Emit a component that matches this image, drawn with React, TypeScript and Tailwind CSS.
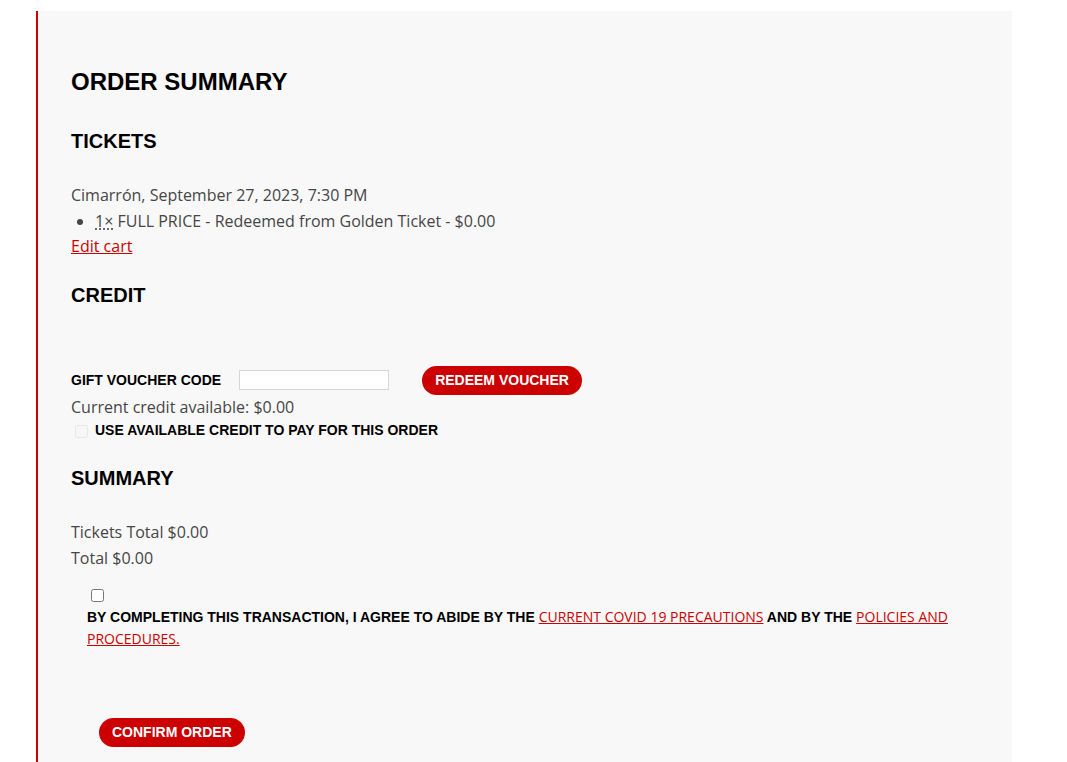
const RED = 'text-[#cc0000]';

function Heading({ children, className = '' }: { children: React.ReactNode; className?: string }) {
  return (
    <h2 className={`font-['Liberation_Sans',Arial,sans-serif] text-[20px] leading-[24px] font-bold text-black ${className}`}>
      {children}
    </h2>
  );
}

function PillButton({ children, className = '' }: { children: React.ReactNode; className?: string }) {
  return (
    <button
      type="button"
      className={`h-[29px] rounded-full bg-[#cc0000] px-[13px] font-['Liberation_Sans',Arial,sans-serif] text-[14px] leading-[29px] font-bold text-white ${className}`}
    >
      {children}
    </button>
  );
}

export default function App() {
  return (
    <div className="min-h-[762px] bg-white pt-[11px] font-['Open_Sans',sans-serif] text-[16px] leading-[25.5px] text-[#464646]">
      <div className="ml-[36px] w-[976px] border-l-2 border-[#cc0000] bg-[#f8f8f8] pt-[56px] pr-[33px] pb-[40px] pl-[33px]">
        <h1 className="font-['Liberation_Sans',Arial,sans-serif] text-[24px] leading-[30px] font-bold text-black">
          ORDER SUMMARY
        </h1>

        <Heading className="mt-[32px]">TICKETS</Heading>
        <div className="mt-[30px]">
          <p>Cimarrón, September 27, 2023, 7:30 PM</p>
          <ul className="list-disc pl-[24px]">
            <li>
              <abbr title="quantity" className="underline decoration-dotted underline-offset-2">1×</abbr> FULL PRICE - Redeemed from Golden Ticket - $0.00
            </li>
          </ul>
          <a href="#" className={`${RED} underline`}>Edit cart</a>
        </div>

        <Heading className="mt-[23px]">CREDIT</Heading>
        <div className="mt-[59px] flex items-center">
          <label className="font-['Liberation_Sans',Arial,sans-serif] text-[14px] leading-[29px] font-bold text-black">
            GIFT VOUCHER CODE
          </label>
          <input type="text" className="ml-[18px] h-[20px] w-[150px] border border-[#d6d6d6] bg-white" />
          <PillButton className="ml-[33px]">REDEEM VOUCHER</PillButton>
        </div>
        <p>Current credit available: $0.00</p>
        <div className="flex h-[22px] items-center">
          <input type="checkbox" disabled className="ml-[4px] h-[13px] w-[13px] opacity-40" />
          <span className="ml-[7px] font-['Liberation_Sans',Arial,sans-serif] text-[14px] font-bold text-black">
            USE AVAILABLE CREDIT TO PAY FOR THIS ORDER
          </span>
        </div>

        <Heading className="mt-[24px]">SUMMARY</Heading>
        <div className="mt-[30px]">
          <p>Tickets Total $0.00</p>
          <p>Total $0.00</p>
        </div>

        <div className="mt-[18px] ml-[16px]">
          <input type="checkbox" className="ml-[4px] block h-[13px] w-[13px]" />
          <p className="mt-[4px] text-[14px] leading-[21px]">
            <span className="font-['Liberation_Sans',Arial,sans-serif] font-bold text-black">
              BY COMPLETING THIS TRANSACTION, I AGREE TO ABIDE BY THE{' '}
            </span>
            <a href="#" className={`${RED} underline`}>CURRENT COVID 19 PRECAUTIONS</a>
            <span className="font-['Liberation_Sans',Arial,sans-serif] font-bold text-black"> AND BY THE </span>
            <a href="#" className={`${RED} underline`}>POLICIES AND PROCEDURES.</a>
          </p>
        </div>

        <PillButton className="mt-[69px] ml-[28px]">CONFIRM ORDER</PillButton>
      </div>
    </div>
  );
}
